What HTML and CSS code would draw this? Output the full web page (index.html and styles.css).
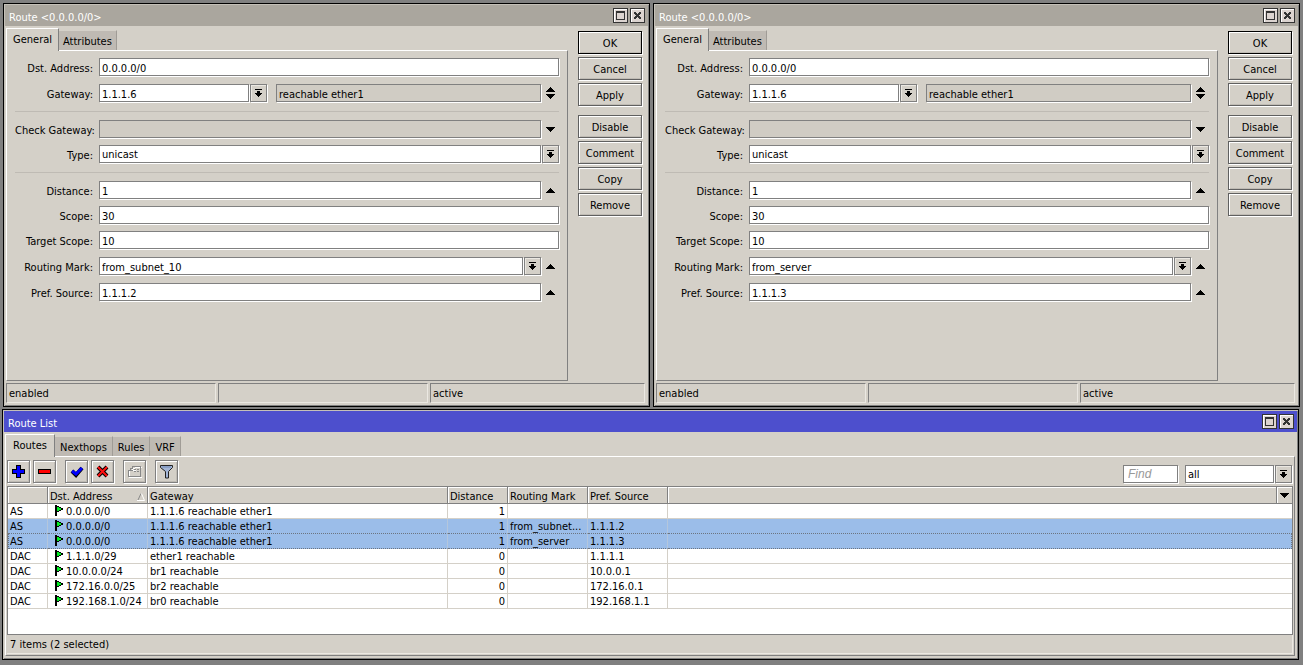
FILE: index.html
```html
<!DOCTYPE html>
<html lang="en">
<head>
    <meta charset="UTF-8">
    <meta name="viewport" content="width=device-width, initial-scale=1.0">
    <title>Route List</title>
    <link rel="stylesheet" href="styles.css">
</head>
<body>
    <!-- Shared icons -->
    <svg class="sprite" width="0" height="0" shape-rendering="crispEdges">
        <symbol id="max" viewBox="0 0 11 11"><path d="M1 1h9v9H1zM2 3v6h7V3z" fill="#333" fill-rule="evenodd"/></symbol>
        <symbol id="close" viewBox="0 0 11 11"><path d="M2 2h2v1h1v1h1V3h1V2h2v2H8v1H7v1h1v1h1v2H7V8H6V7H5v1H4v1H2V7h1V6h1V5H3V4H2z" fill="#333"/></symbol>
        <symbol id="drop" viewBox="0 0 9 9"><path d="M1 0h7v1H1zM3 2h3v2h2v1H7v1H6v1H5v1H4V7H3V6H2V5H1V4h2z"/></symbol>
        <symbol id="up" viewBox="0 0 9 5"><path d="M4 0h1v1h1v1h1v1h1v1h1v1H0V4h1V3h1V2h1V1h1z"/></symbol>
        <symbol id="down" viewBox="0 0 9 5"><path d="M0 0h9v1H8v1H7v1H6v1H5v1H4V4H3V3H2V2H1V1H0z"/></symbol>
        <symbol id="updown" viewBox="0 0 9 12"><path d="M4 0h1v1h1v1h1v1h1v1h1v1H0V4h1V3h1V2h1V1h1zM0 7h9v1H8v1H7v1H6v1H5v1H4v-1H3v-1H2V9H1V8H0z"/></symbol>
        <symbol id="flag" viewBox="0 0 8 11"><path d="M0 0h2v1h2v1h2v1h2v2H6v1H4v1H2v4H0z" /><path d="M2 2h2v1h2v2H4v1H2z" fill="#0e2"/></symbol>
    </svg>

    <div class="desktop">
        <!-- First route -->
        <section class="window">
            <div class="titlebar">
                <span class="title">Route &lt;0.0.0.0/0&gt;</span>
                <button class="win-btn" aria-label="Maximize"><svg width="11" height="11"><use href="#max"/></svg></button>
                <button class="win-btn" aria-label="Close"><svg width="11" height="11"><use href="#close"/></svg></button>
            </div>
            <div class="window-main">
                <div class="tabbed">
                    <div class="tabs">
                        <button class="tab active">General</button>
                        <button class="tab">Attributes</button>
                    </div>
                    <form class="panel">
                        <div class="group loose">
                            <div class="row">
                                <label for="dst1">Dst. Address:</label>
                                <input class="field" id="dst1" value="0.0.0.0/0">
                            </div>
                            <div class="row">
                                <label for="gw1">Gateway:</label>
                                <input class="field gateway" id="gw1" value="1.1.1.6">
                                <button type="button" class="drop" aria-label="Choose gateway"><svg width="9" height="9"><use href="#drop"/></svg></button>
                                <input class="field muted state" value="reachable ether1" aria-label="Gateway state" readonly>
                                <button type="button" class="toggle" aria-label="Add or remove gateway"><svg width="9" height="12"><use href="#updown"/></svg></button>
                            </div>
                        </div>
                        <hr>
                        <div class="group">
                            <div class="row">
                                <label for="check1">Check Gateway:</label>
                                <input class="field muted" id="check1" readonly>
                                <button type="button" class="toggle" aria-label="Set check gateway"><svg width="9" height="5"><use href="#down"/></svg></button>
                            </div>
                            <div class="row">
                                <label for="type1">Type:</label>
                                <select class="field" id="type1"><option>unicast</option></select>
                                <button type="button" class="drop" aria-label="Choose type"><svg width="9" height="9"><use href="#drop"/></svg></button>
                            </div>
                        </div>
                        <hr>
                        <div class="group">
                            <div class="row">
                                <label for="dist1">Distance:</label>
                                <input class="field" id="dist1" value="1">
                                <button type="button" class="toggle" aria-label="Unset distance"><svg width="9" height="5"><use href="#up"/></svg></button>
                            </div>
                            <div class="row">
                                <label for="scope1">Scope:</label>
                                <input class="field" id="scope1" value="30">
                            </div>
                            <div class="row">
                                <label for="target1">Target Scope:</label>
                                <input class="field" id="target1" value="10">
                            </div>
                        </div>
                        <div class="group loose more">
                            <div class="row">
                                <label for="mark1">Routing Mark:</label>
                                <input class="field" id="mark1" value="from_subnet_10">
                                <button type="button" class="drop" aria-label="Choose routing mark"><svg width="9" height="9"><use href="#drop"/></svg></button>
                                <button type="button" class="toggle" aria-label="Unset routing mark"><svg width="9" height="5"><use href="#up"/></svg></button>
                            </div>
                            <div class="row">
                                <label for="pref1">Pref. Source:</label>
                                <input class="field" id="pref1" value="1.1.1.2">
                                <button type="button" class="toggle" aria-label="Unset pref. source"><svg width="9" height="5"><use href="#up"/></svg></button>
                            </div>
                        </div>
                    </form>
                </div>
                <div class="actions">
                    <button class="btn default">OK</button>
                    <button class="btn">Cancel</button>
                    <button class="btn">Apply</button>
                    <button class="btn spaced">Disable</button>
                    <button class="btn">Comment</button>
                    <button class="btn">Copy</button>
                    <button class="btn">Remove</button>
                </div>
            </div>
            <div class="statusbar">
                <div class="cell">enabled</div>
                <div class="cell"></div>
                <div class="cell">active</div>
            </div>
        </section>

        <!-- Second route -->
        <section class="window">
            <div class="titlebar">
                <span class="title">Route &lt;0.0.0.0/0&gt;</span>
                <button class="win-btn" aria-label="Maximize"><svg width="11" height="11"><use href="#max"/></svg></button>
                <button class="win-btn" aria-label="Close"><svg width="11" height="11"><use href="#close"/></svg></button>
            </div>
            <div class="window-main">
                <div class="tabbed">
                    <div class="tabs">
                        <button class="tab active">General</button>
                        <button class="tab">Attributes</button>
                    </div>
                    <form class="panel">
                        <div class="group loose">
                            <div class="row">
                                <label for="dst2">Dst. Address:</label>
                                <input class="field" id="dst2" value="0.0.0.0/0">
                            </div>
                            <div class="row">
                                <label for="gw2">Gateway:</label>
                                <input class="field gateway" id="gw2" value="1.1.1.6">
                                <button type="button" class="drop" aria-label="Choose gateway"><svg width="9" height="9"><use href="#drop"/></svg></button>
                                <input class="field muted state" value="reachable ether1" aria-label="Gateway state" readonly>
                                <button type="button" class="toggle" aria-label="Add or remove gateway"><svg width="9" height="12"><use href="#updown"/></svg></button>
                            </div>
                        </div>
                        <hr>
                        <div class="group">
                            <div class="row">
                                <label for="check2">Check Gateway:</label>
                                <input class="field muted" id="check2" readonly>
                                <button type="button" class="toggle" aria-label="Set check gateway"><svg width="9" height="5"><use href="#down"/></svg></button>
                            </div>
                            <div class="row">
                                <label for="type2">Type:</label>
                                <select class="field" id="type2"><option>unicast</option></select>
                                <button type="button" class="drop" aria-label="Choose type"><svg width="9" height="9"><use href="#drop"/></svg></button>
                            </div>
                        </div>
                        <hr>
                        <div class="group">
                            <div class="row">
                                <label for="dist2">Distance:</label>
                                <input class="field" id="dist2" value="1">
                                <button type="button" class="toggle" aria-label="Unset distance"><svg width="9" height="5"><use href="#up"/></svg></button>
                            </div>
                            <div class="row">
                                <label for="scope2">Scope:</label>
                                <input class="field" id="scope2" value="30">
                            </div>
                            <div class="row">
                                <label for="target2">Target Scope:</label>
                                <input class="field" id="target2" value="10">
                            </div>
                        </div>
                        <div class="group loose more">
                            <div class="row">
                                <label for="mark2">Routing Mark:</label>
                                <input class="field" id="mark2" value="from_server">
                                <button type="button" class="drop" aria-label="Choose routing mark"><svg width="9" height="9"><use href="#drop"/></svg></button>
                                <button type="button" class="toggle" aria-label="Unset routing mark"><svg width="9" height="5"><use href="#up"/></svg></button>
                            </div>
                            <div class="row">
                                <label for="pref2">Pref. Source:</label>
                                <input class="field" id="pref2" value="1.1.1.3">
                                <button type="button" class="toggle" aria-label="Unset pref. source"><svg width="9" height="5"><use href="#up"/></svg></button>
                            </div>
                        </div>
                    </form>
                </div>
                <div class="actions">
                    <button class="btn default">OK</button>
                    <button class="btn">Cancel</button>
                    <button class="btn">Apply</button>
                    <button class="btn spaced">Disable</button>
                    <button class="btn">Comment</button>
                    <button class="btn">Copy</button>
                    <button class="btn">Remove</button>
                </div>
            </div>
            <div class="statusbar">
                <div class="cell">enabled</div>
                <div class="cell"></div>
                <div class="cell">active</div>
            </div>
        </section>
    </div>

    <!-- Route list -->
    <section class="window list-window">
        <div class="titlebar focused">
            <span class="title">Route List</span>
            <button class="win-btn" aria-label="Maximize"><svg width="11" height="11"><use href="#max"/></svg></button>
            <button class="win-btn" aria-label="Close"><svg width="11" height="11"><use href="#close"/></svg></button>
        </div>
        <div class="tabbed">
            <div class="tabs">
                <button class="tab active">Routes</button>
                <button class="tab">Nexthops</button>
                <button class="tab">Rules</button>
                <button class="tab">VRF</button>
            </div>
            <div class="list-panel">
                <div class="toolbar">
                    <button class="tool" aria-label="Add"><svg width="15" height="15" shape-rendering="crispEdges"><path d="M5 1h5v4h4v5h-4v4H5v-4H1V5h4z"/><path d="M6 2h3v4h4v3H9v4H6V9H2V6h4z" fill="#00f"/></svg></button>
                    <button class="tool" aria-label="Remove"><svg width="15" height="15" shape-rendering="crispEdges"><path d="M1 5h13v5H1z"/><path d="M2 6h11v3H2z" fill="#f00"/></svg></button>
                    <button class="tool spaced" aria-label="Enable"><svg width="15" height="15"><path d="M3 7l4 4 6-7" fill="none" stroke="#000" stroke-width="4"/><path d="M3 7l4 3 6-6" fill="none" stroke="#00f" stroke-width="3"/></svg></button>
                    <button class="tool" aria-label="Disable"><svg width="15" height="15"><path d="M3 3l9 9M12 3l-9 9" stroke="#000" stroke-width="4"/><path d="M3 3l9 9M12 3l-9 9" stroke="#f11" stroke-width="2"/></svg></button>
                    <button class="tool spaced" aria-label="Comment"><svg width="15" height="15" shape-rendering="crispEdges"><path d="M6.500 2.500h8v10h-13v-7h3v-2h2M4.500 5.500h3" transform="translate(1 1)" fill="none" stroke="#fff"/><path d="M5.500 2.500h8v10h-12v-6h2v-2h2zM3 6.500h3M7 5.500h2M10 5.500h2M7 7.500h2M10 7.500h2" fill="none" stroke="#888"/></svg></button>
                    <button class="tool spaced" aria-label="Filter"><svg width="15" height="15"><path d="M1.500 1.500h12v2l-4 4v6.500h-3V7.500l-5-4z" fill="#a3b5d6" stroke="#222"/><path d="M3 3h9" stroke="#7089b5"/></svg></button>
                    <input class="field find" placeholder="Find" aria-label="Find">
                    <div class="filter">
                        <select class="field" aria-label="Routing table"><option>all</option></select>
                        <button class="drop" aria-label="Choose table"><svg width="9" height="9"><use href="#drop"/></svg></button>
                    </div>
                </div>
                <div class="grid">
                    <table>
                        <colgroup>
                            <col class="c-flags"><col class="c-dst"><col class="c-gateway"><col class="c-distance"><col class="c-mark"><col class="c-mark"><col>
                        </colgroup>
                        <thead>
                            <tr>
                                <th></th>
                                <th><div class="sorted">Dst. Address <svg width="8" height="8"><path d="M1 7L4 0.500" stroke="#888" fill="none"/><path d="M4.500 0.500L7.500 7.500H0" stroke="#fff" fill="none"/></svg></div></th>
                                <th>Gateway</th>
                                <th>Distance</th>
                                <th>Routing Mark</th>
                                <th>Pref. Source</th>
                                <th class="menu"><button class="columns" aria-label="Columns"><svg width="9" height="5"><use href="#down"/></svg></button></th>
                            </tr>
                        </thead>
                        <tbody>
                            <tr><td>AS</td><td><svg class="flag" width="8" height="11"><use href="#flag"/></svg>0.0.0.0/0</td><td>1.1.1.6 reachable ether1</td><td class="num">1</td><td></td><td></td><td></td></tr>
                            <tr class="selected"><td>AS</td><td><svg class="flag" width="8" height="11"><use href="#flag"/></svg>0.0.0.0/0</td><td>1.1.1.6 reachable ether1</td><td class="num">1</td><td>from_subnet...</td><td>1.1.1.2</td><td></td></tr>
                            <tr class="selected current"><td>AS</td><td><svg class="flag" width="8" height="11"><use href="#flag"/></svg>0.0.0.0/0</td><td>1.1.1.6 reachable ether1</td><td class="num">1</td><td>from_server</td><td>1.1.1.3</td><td></td></tr>
                            <tr><td>DAC</td><td><svg class="flag" width="8" height="11"><use href="#flag"/></svg>1.1.1.0/29</td><td>ether1 reachable</td><td class="num">0</td><td></td><td>1.1.1.1</td><td></td></tr>
                            <tr><td>DAC</td><td><svg class="flag" width="8" height="11"><use href="#flag"/></svg>10.0.0.0/24</td><td>br1 reachable</td><td class="num">0</td><td></td><td>10.0.0.1</td><td></td></tr>
                            <tr><td>DAC</td><td><svg class="flag" width="8" height="11"><use href="#flag"/></svg>172.16.0.0/25</td><td>br2 reachable</td><td class="num">0</td><td></td><td>172.16.0.1</td><td></td></tr>
                            <tr><td>DAC</td><td><svg class="flag" width="8" height="11"><use href="#flag"/></svg>192.168.1.0/24</td><td>br0 reachable</td><td class="num">0</td><td></td><td>192.168.1.1</td><td></td></tr>
                        </tbody>
                    </table>
                </div>
                <div class="summary">7 items (2 selected)</div>
            </div>
        </div>
    </section>
</body>
</html>
```

FILE: styles.css
```css
* {
    box-sizing: border-box;
}

body {
    margin: 0;
    padding: 3px 3px 0;
    background-color: #808080;
    font-family: "DejaVu Sans Condensed", "DejaVu Sans", sans-serif;
    font-size: 11px;
    line-height: 14px;
    color: #000;
}

button, input, select {
    font: inherit;
    color: inherit;
    margin: 0;
    padding: 0;
    border-radius: 0;
    outline: none;
}

svg {
    display: block;
}

.sprite {
    position: absolute;
}

/* Windows */
.desktop {
    display: flex;
    gap: 3px;
}

.window {
    flex: 1;
    min-width: 0;
    padding: 1px;
    border: 1px solid #000;
    background-color: #d4d0c8;
    box-shadow: inset 1px 1px #c4c0b8, inset -1px -1px #808080;
}

.list-window {
    margin: 2px 1px 0 -1px;
}

.titlebar {
    display: flex;
    align-items: center;
    gap: 2px;
    height: 21px;
    padding: 0 3px 0 4px;
    background-color: #aaa69e;
    color: #fff;
}

.titlebar.focused {
    background-color: #4d4fcd;
}

.title {
    flex: 1;
    padding-top: 5px;
}

.win-btn {
    width: 15px;
    height: 15px;
    padding: 1px;
    border: 1px solid #333;
    background-color: #dcd4d0;
    box-shadow: inset 1px 1px #fff;
}

/* Tabs */
.window-main {
    display: flex;
    gap: 10px;
    padding-right: 6px;
}

.tabbed {
    flex: 1;
    min-width: 0;
    padding: 2px 0 0 1px;
}

.tabs {
    display: flex;
    align-items: flex-end;
    height: 22px;
}

.tab {
    height: 20px;
    padding: 2px 4px 0;
    border: 0;
    border-top: 1px solid #d4d0c8;
    border-right: 1px solid #a09c96;
    background-color: #bfbab3;
}

.list-window .tab {
    padding: 2px 5px 0;
}

.tab.active,
.list-window .tab.active {
    position: relative;
    min-width: 50px;
    height: 23px;
    margin-bottom: -1px;
    padding: 0 6px;
    border: 1px solid #fff;
    border-right-color: #808080;
    border-bottom: 0;
    background-color: #d4d0c8;
}

.panel, .list-panel {
    border: 1px solid #808080;
    border-top-color: #fff;
    border-left-color: #fff;
}

.panel {
    min-height: 331px;
    padding: 7px 8px;
}

/* Form */
.group {
    display: grid;
    gap: 7px;
}

.group.loose {
    gap: 8px;
}

.group.more {
    margin-top: 8px;
}

hr {
    height: 1px;
    margin: 9px 0 8px;
    border: 0;
    background-color: #bfbbb4;
}

.row {
    display: flex;
    height: 18px;
}

.row label {
    width: 78px;
    margin-right: 6px;
    padding-top: 4px;
    text-align: right;
    white-space: nowrap;
}

.field {
    flex: 1;
    min-width: 0;
    height: 18px;
    padding: 2px 2px 0;
    border: 1px solid #808080;
    background-color: #fff;
    box-shadow: 1px 1px #fff;
    appearance: none;
}

.field.muted {
    background-color: #d0ccc4;
}

.field.gateway {
    flex: 0 1 150px;
}

.field.state {
    margin-left: 9px;
}

.drop {
    display: flex;
    align-items: center;
    justify-content: center;
    width: 17px;
    height: 18px;
    margin-left: 1px;
    border: 1px solid #808080;
    background-color: #d4d0c8;
    box-shadow: 1px 1px #fff, inset 1px 1px #ebe8e2;
}

.toggle {
    display: flex;
    align-items: center;
    justify-content: center;
    width: 18px;
    border: 0;
    background: none;
}

/* Action buttons */
.actions {
    display: flex;
    flex-direction: column;
    gap: 3px;
    padding-top: 5px;
}

.btn, .tool {
    height: 23px;
    border: 1px solid #606060;
    background-color: #d4d0c8;
    box-shadow: 1px 1px #fff, inset 1px 1px #fff, inset -1px -1px #bfbbb4;
}

.btn {
    width: 64px;
    padding-top: 3px;
}

.btn.default {
    border-color: #000;
}

.btn.spaced {
    margin-top: 6px;
}

/* Status bar */
.statusbar {
    display: grid;
    grid-template-columns: 210px 210px 1fr;
    gap: 2px;
    padding: 2px 3px 2px 1px;
}

.cell {
    height: 20px;
    padding: 3px 2px;
    border: 1px solid #808080;
    border-right-color: #ebe8e2;
    border-bottom-color: #ebe8e2;
}

/* Route list */
.list-window .tabbed {
    padding-right: 2px;
    padding-bottom: 2px;
}

.list-panel {
    padding: 0 1px 1px;
}

.toolbar {
    display: flex;
    align-items: flex-end;
    gap: 3px;
    padding: 3px 1px 3px 0;
}

.tool {
    display: flex;
    align-items: center;
    justify-content: center;
    width: 23px;
    border-color: #808080;
}

.tool.spaced {
    margin-left: 6px;
}

.find {
    flex: 0 0 55px;
    margin-left: auto;
    padding: 0 4px 1px;
    font: italic 12px "Liberation Sans", Arial, sans-serif;
}

.find::placeholder {
    color: #999;
}

.filter {
    display: flex;
    width: 107px;
    margin-left: 4px;
}

.grid {
    min-height: 149px;
    border: 1px solid #808080;
    background-color: #fff;
}

table {
    width: 100%;
    table-layout: fixed;
    border-collapse: separate;
    border-spacing: 0;
    line-height: 12px;
}

.c-flags {
    width: 40px;
}

.c-dst {
    width: 100px;
}

.c-gateway {
    width: 300px;
}

.c-distance {
    width: 60px;
}

.c-mark {
    width: 80px;
}

th, td {
    padding: 2px 2px 0;
    text-align: left;
    white-space: nowrap;
    font-weight: normal;
}

th {
    height: 17px;
    padding-top: 4px;
    border-right: 1px solid #808080;
    border-bottom: 1px solid #808080;
    background-color: #d4d0c8;
    box-shadow: inset 1px 1px #fff;
}

th.menu {
    padding: 0;
    border-right: 0;
}

.columns {
    display: flex;
    align-items: center;
    justify-content: center;
    width: 16px;
    height: 16px;
    margin-left: auto;
    border: 0;
    border-left: 1px solid #808080;
    background: none;
    box-shadow: inset 1px 1px #fff;
}

.sorted {
    display: flex;
    align-items: center;
    justify-content: space-between;
}

td {
    height: 15px;
    border-right: 1px solid #d4d0c8;
    border-bottom: 1px solid #d4d0c8;
}

td:last-child {
    border-right: 0;
}

.num {
    text-align: right;
}

.flag {
    display: inline-block;
    margin: -1px 3px 0 5px;
    vertical-align: top;
}

.selected td {
    background-color: #9bbde9;
    border-right-color: #b4c6dc;
    border-bottom: 1px dotted #6c7480;
}

.current td:first-child {
    border-left: 1px dotted #6c7480;
    padding-left: 1px;
}

.current td:last-child {
    border-right: 1px dotted #6c7480;
}

.summary {
    height: 19px;
    padding: 3px 3px;
    border-right: 1px solid #ebe8e2;
    border-bottom: 1px solid #ebe8e2;
}
```
